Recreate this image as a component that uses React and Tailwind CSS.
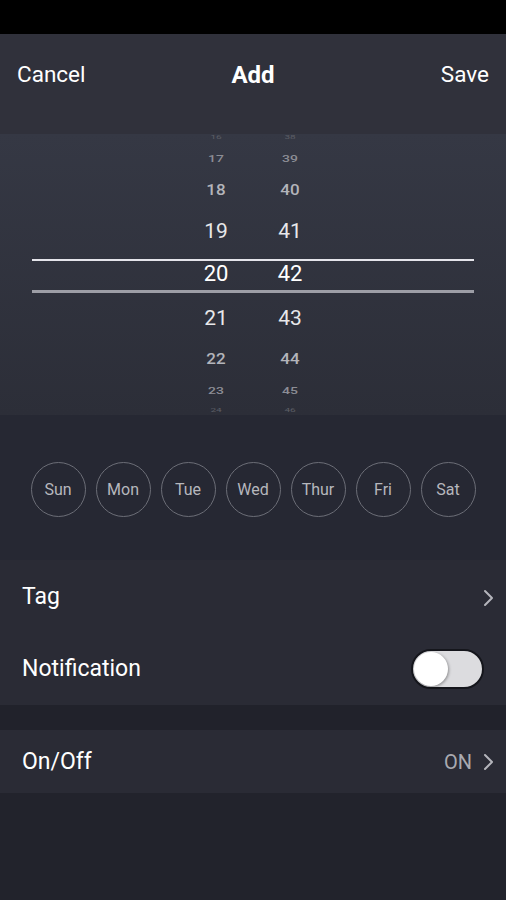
import React from "react";

const rows = [
  { h: "h-[6px]", size: "text-[10px]", color: "text-[#5c5e66]", a: "16", b: "38", cls: "scale-y-50" },
  { h: "h-[36px]", size: "text-[14px]", color: "text-[#8c8d95]", a: "17", b: "39", cls: "scale-y-[0.7] font-medium" },
  { h: "h-[28px]", size: "text-[17px]", color: "text-[#b3b4ba]", a: "18", b: "40", cls: "scale-y-[0.9] font-medium" },
  { h: "h-[54px]", size: "text-[21px]", color: "text-[#e8e8ea]", a: "19", b: "41", cls: "" },
  { h: "h-[32px]", size: "text-[22px]", color: "text-white", a: "20", b: "42", cls: "" },
  { h: "h-[56px]", size: "text-[21px]", color: "text-[#e8e8ea]", a: "21", b: "43", cls: "" },
  { h: "h-[26px]", size: "text-[17px]", color: "text-[#b3b4ba]", a: "22", b: "44", cls: "scale-y-[0.9] font-medium" },
  { h: "h-[36px]", size: "text-[14px]", color: "text-[#8c8d95]", a: "23", b: "45", cls: "scale-y-[0.7] font-medium" },
  { h: "h-[4px]", size: "text-[10px]", color: "text-[#5c5e66]", a: "24", b: "46", cls: "scale-y-50" },
];

const days = ["Sun", "Mon", "Tue", "Wed", "Thur", "Fri", "Sat"];

function Chevron() {
  return (
    <svg width="12" height="18" viewBox="0 0 12 18" fill="none">
      <path d="M3 2 L10 9 L3 16" stroke="#b4b5bb" strokeWidth="2" strokeLinecap="round" strokeLinejoin="round" />
    </svg>
  );
}

export default function App() {
  return (
    <div className="w-[506px] h-[900px] bg-[#22232c] flex flex-col" style={{ fontFamily: "Roboto, 'Noto Sans', sans-serif" }}>
      <div className="h-[34px] bg-black" />
      <div className="h-[100px] bg-[#30313b] flex flex-col">
        <div className="h-[81px] grid grid-cols-3 items-center px-[17px] text-white text-[22.5px]">
          <span className="justify-self-start">Cancel</span>
          <span className="justify-self-center font-bold text-[24px]">Add</span>
          <span className="justify-self-end">Save</span>
        </div>
      </div>
      <div className="h-[281px] relative overflow-hidden bg-gradient-to-b from-[#353844] to-[#2c2e38] flex flex-col">
        {rows.map((r, i) => (
          <div key={i} className={`${r.h} flex items-center justify-center gap-[34px] shrink-0`}>
            <span className={`w-[40px] text-center leading-none ${r.size} ${r.color} ${r.cls}`}>{r.a}</span>
            <span className={`w-[40px] text-center leading-none ${r.size} ${r.color} ${r.cls}`}>{r.b}</span>
          </div>
        ))}
        <div className="absolute left-[32px] right-[32px] top-[125px] h-[2px] bg-[#e4e4ea]" />
        <div className="absolute left-[32px] right-[32px] top-[156px] h-[3px] bg-[#9d9ea6]" />
      </div>
      <div className="h-[145px] bg-[#262833] flex items-center justify-center gap-[10px] pt-[4px]">
        {days.map((d) => (
          <div key={d} className="w-[55px] h-[55px] rounded-full border-[1.5px] border-[#6c6e77] flex items-center justify-center text-[16px] text-[#b6b7bd]">
            {d}
          </div>
        ))}
      </div>
      <div className="bg-[#2a2b35] flex flex-col">
        <div className="h-[72px] flex items-center justify-between pl-[22px] pr-[12px] pt-[3px]">
          <span className="text-white text-[23px]">Tag</span>
          <Chevron />
        </div>
        <div className="h-[73px] flex items-center justify-between pl-[22px] pr-[22px] pt-[1px]">
          <span className="text-white text-[23px]">Notification</span>
          <div className="w-[73px] h-[40px] rounded-full bg-[#dcdcdf] border-[2px] border-[#15161c] relative">
            <div className="absolute left-[1px] top-[1px] w-[34px] h-[34px] rounded-full bg-white shadow-[1px_1px_3px_rgba(0,0,0,0.35)]" />
          </div>
        </div>
      </div>
      <div className="h-[25px] bg-[#21222b]" />
      <div className="h-[63px] bg-[#2a2b35] flex items-center justify-between pl-[22px] pr-[12px] pt-[1px]">
        <span className="text-white text-[23px]">On/Off</span>
        <div className="flex items-center gap-[10px]">
          <span className="text-[#a9aab0] text-[20px]">ON</span>
          <Chevron />
        </div>
      </div>
      <div className="flex-1 bg-[#22232c]" />
    </div>
  );
}
